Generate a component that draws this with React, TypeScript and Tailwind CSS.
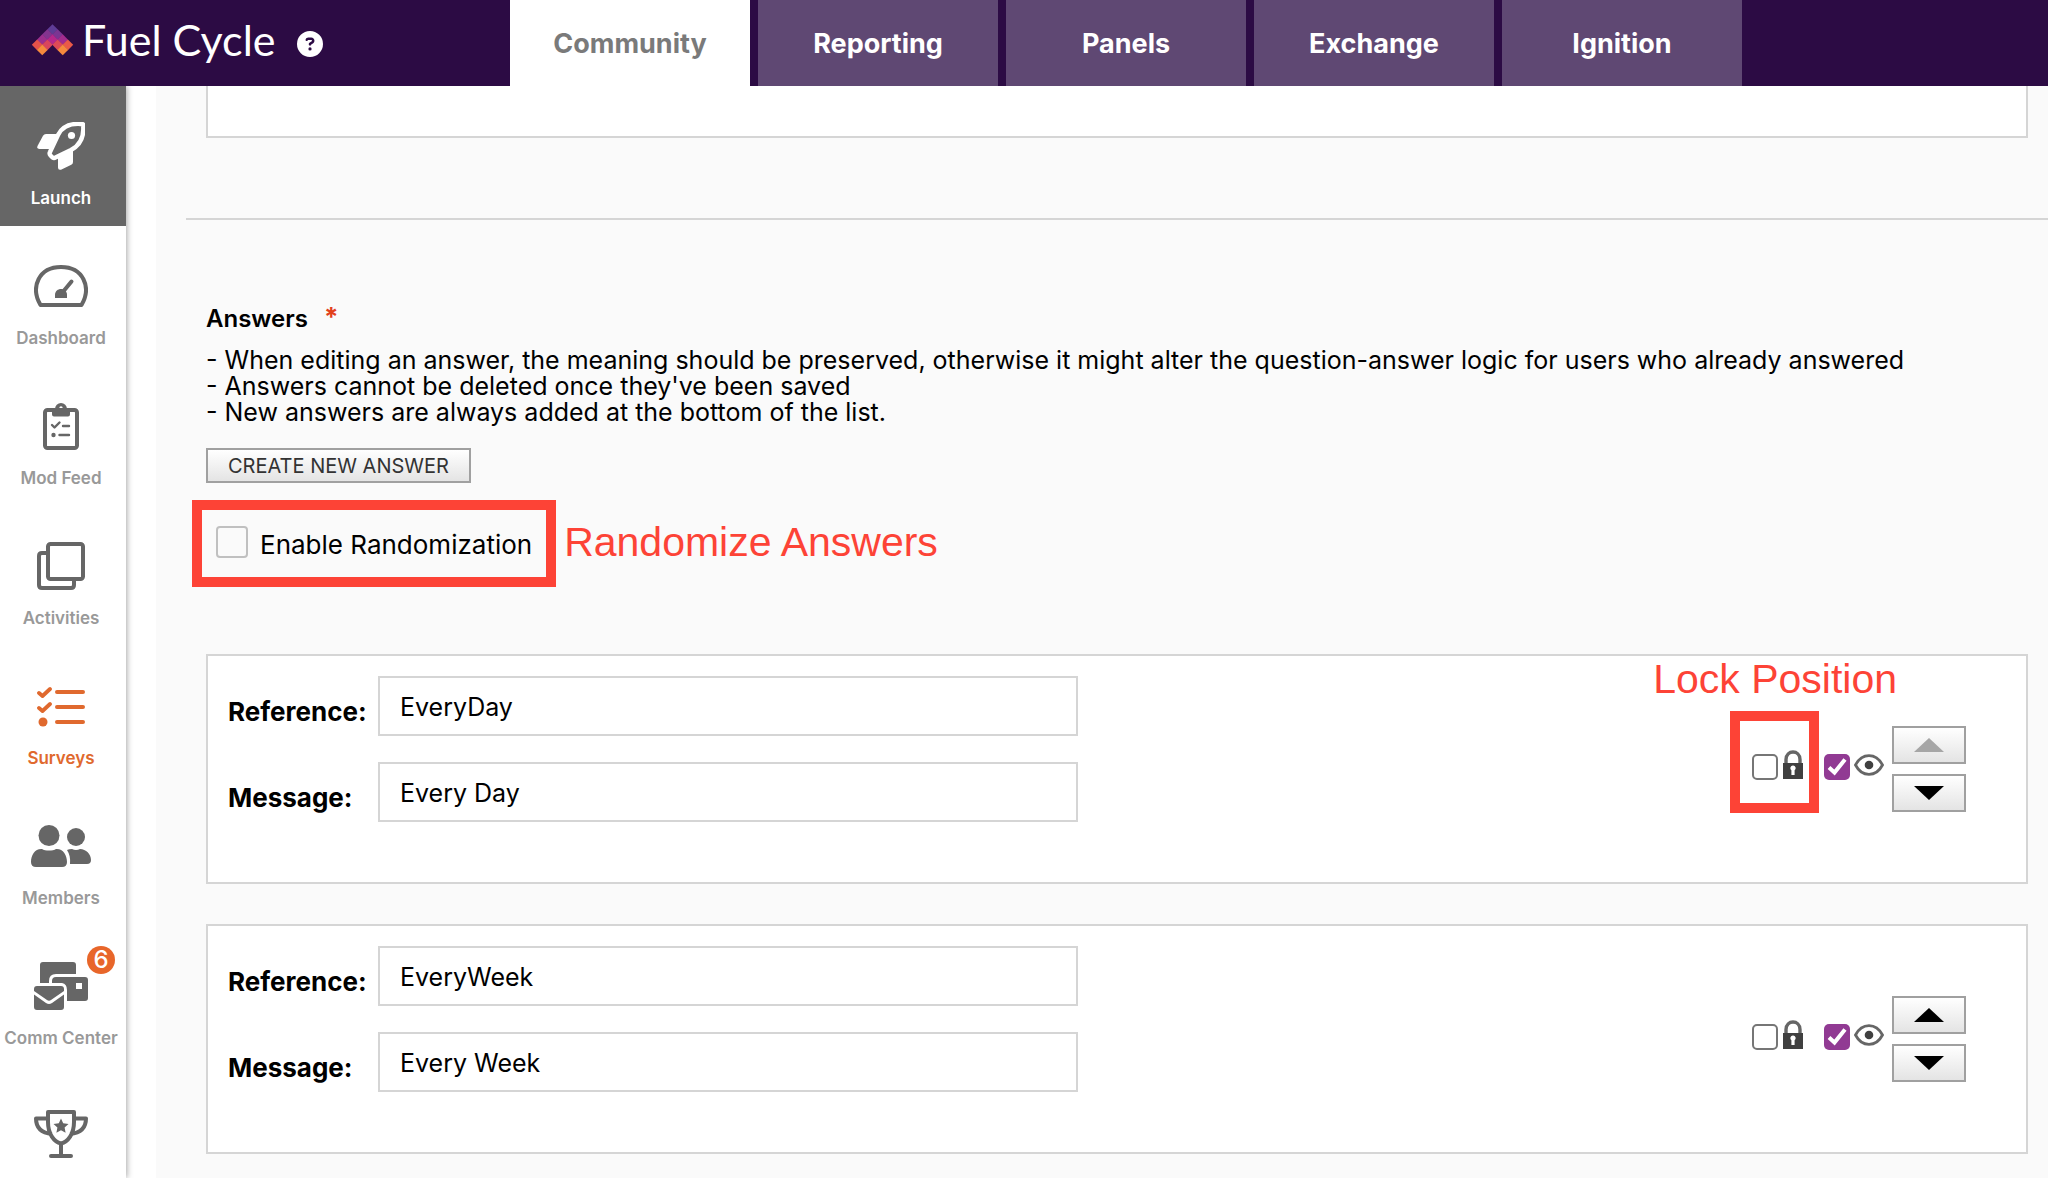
import type { ReactNode } from "react";
import { FaCircleQuestion } from "react-icons/fa6";

const tabs = ["Community", "Reporting", "Panels", "Exchange", "Ignition"];

const logoTiles: [number, number, string][] = [
  [21, 5, "#5f3c96"],
  [16, 10, "#83348f"],
  [26, 10, "#7b3592"],
  [11, 15, "#9c2f8e"],
  [21, 15, "#b5288c"],
  [31, 15, "#a32c8e"],
  [6, 20, "#e5524a"],
  [16, 20, "#d9455c"],
  [26, 20, "#dd4a57"],
  [36, 20, "#ea5a47"],
  [11, 25, "#f58a3d"],
  [31, 25, "#f58a3d"],
];

function LogoMark() {
  return (
    <svg width="43" height="32" viewBox="0 0 42 31" aria-hidden="true">
      {logoTiles.map(([x, y, fill]) => (
        <path key={`${x}-${y}`} d={`M${x} ${y - 5} l5.2 5.2 l-5.2 5.200 l-5.200 -5.200 Z`} fill={fill} />
      ))}
    </svg>
  );
}

function Icon({ w, h, children }: { w: number; h: number; children: ReactNode }) {
  return (
    <svg width={w} height={h} viewBox={`0 0 ${w} ${h}`} fill="currentColor" aria-hidden="true">
      {children}
    </svg>
  );
}

const stroke = {
  fill: "none",
  stroke: "currentColor",
  strokeWidth: 4,
  strokeLinecap: "round" as const,
  strokeLinejoin: "round" as const,
};

const rocket = (
  <Icon w={48} h={48}>
    <path
      d="M46 2.2 C34 .8 25.500 4 21 13 L13 30 Q12 32 13.500 33.500 L15.500 35.500 Q17 36.500 18.500 35.500 L34 28 C43.500 23 47.500 14 46 2.200 Z"
      {...stroke}
      strokeWidth={4.4}
    />
    <circle cx="34.500" cy="13.500" r="3.600" />
    <path d="M20 12 H9 Q7 12 6 13.700 L.5 24 Q-.5 27 2.500 27 H13 Z" />
    <path d="M36 28 V40 Q36 42 34.300 42.800 L24 47.700 Q21 48.500 21 45.500 V35 Z" />
  </Icon>
);
const gauge = (
  <Icon w={54} h={42}>
    <path d="M6.500 40 C-4 22 5 2 27 2 C49 2 58 22 47.500 40 Z" {...stroke} />
    <path d="M28 28 L37.500 16.500" {...stroke} />
    <path d="M21 33 V30 C21 22 33 22 33 30 V33 Z" />
  </Icon>
);
const clipboard = (
  <Icon w={36} h={48}>
    <rect x="2" y="8" width="32" height="38" rx="2.500" {...stroke} />
    <path
      fillRule="evenodd"
      d="M9 7 H12 A6 6 0 0 1 24 7 H27 V12.500 Q27 14.500 25 14.500 H11 Q9 14.500 9 12.500 Z M18 4.300 a1.700 1.700 0 1 0 0 3.400 a1.700 1.700 0 1 0 0 -3.400 Z"
    />
    <path d="M9 23 L11.500 25.500 L16.500 20.500" {...stroke} strokeWidth={2.4} />
    <path d="M20 24 H26 M16.500 33 H26" {...stroke} strokeWidth={2.4} />
    <circle cx="10.500" cy="33" r="2.200" />
  </Icon>
);
const copies = (
  <Icon w={48} h={48}>
    <rect x="11" y="2" width="35" height="35" rx="2.500" {...stroke} />
    <path d="M9 11 H5 Q2 11 2 14 V43 Q2 46 5 46 H34 Q37 46 37 43 V39" {...stroke} strokeLinecap="butt" />
  </Icon>
);
const listCheck = (
  <Icon w={48} h={42}>
    <path d="M2 8 L5.500 11 L13 4 M2 23 L5.500 26 L13 19" {...stroke} strokeWidth={3.8} />
    <path d="M20 7 H46 M20 22 H46 M20 37 H46" {...stroke} />
    <circle cx="6" cy="37" r="4.500" />
  </Icon>
);
const members = (
  <Icon w={60} h={42}>
    <circle cx="18" cy="10.500" r="10.500" />
    <path d="M11 24 C14 26 22 26 25 24 C32 23.500 36 30 36 37 Q36 42 31 42 H5 Q0 42 0 37 C0 30 4 23.500 11 24 Z" />
    <circle cx="45" cy="12" r="9" />
    <path d="M36 25 Q38 24 41 24 Q45 26 49 24 C55 24 60 29 60 35 Q60 39 56 39 H39 C39.500 33 38.500 29 36 25 Z" />
  </Icon>
);
const mail = (
  <Icon w={54} h={48}>
    <path d="M9 0 H39 Q42 0 42 3 V12 H22 Q15 12 15 19 V21 H6 V3 Q6 0 9 0 Z" />
    <path
      fillRule="evenodd"
      d="M22 15 H51 Q54 15 54 18 V36 Q54 39 51 39 H33 V28 Q33 22 28 21 H18 V19 Q18 15 22 15 Z M42 21 V27 H48 V21 Z"
    />
    <path d="M0 27 Q0 24 3 24 H27 Q30 24 30 27 V29 L17 38 Q15 39.500 13 38 L0 29 Z" />
    <path d="M0 32.500 L12 41 Q15 43 18 41 L30 32.500 V45 Q30 48 27 48 H3 Q0 48 0 45 Z" />
  </Icon>
);
const trophy = (
  <Icon w={54} h={48}>
    <path d="M14 2 H40 V12 C40 24 34 32 27 33.500 C20 32 14 24 14 12 Z" {...stroke} />
    <path
      d="M14 8.500 H2 C2 18 8 23 18 24 M40 8.500 H52 C52 18 46 23 36 24"
      {...stroke}
      strokeLinecap="butt"
    />
    <path d="M27 34 V45 M17 46 H37" {...stroke} />
    <path d="M27 8.500 L29.200 13.300 L34.500 14 L30.600 17.600 L31.600 22.800 L27 20.200 L22.400 22.800 L23.400 17.600 L19.500 14 L24.800 13.300 Z" />
  </Icon>
);

type NavEntry = { label: string; icon: ReactNode; state?: "current" | "accent"; badge?: number; tall?: boolean };

const navEntries: NavEntry[] = [
  { label: "Launch", icon: rocket, state: "current" },
  { label: "Dashboard", icon: gauge },
  { label: "Mod Feed", icon: clipboard },
  { label: "Activities", icon: copies },
  { label: "Surveys", icon: listCheck, state: "accent" },
  { label: "Members", icon: members },
  { label: "Comm Center", icon: mail, badge: 6, tall: true },
];

function NavItem({ label, icon, state, badge, tall }: NavEntry) {
  const tone =
    state === "current"
      ? "bg-[#666666] text-white"
      : state === "accent"
        ? "text-[#e0692e]"
        : "text-[#666666]";
  const labelTone = state ? "" : "text-[#999999]";
  return (
    <a
      href="#"
      className={`flex shrink-0 flex-col items-center pt-9 pr-1 ${tall ? "h-[148px]" : "h-[140px]"} ${tone}`}
    >
      <span className="relative flex h-12 items-center">
        {icon}
        {badge ? (
          <span className="absolute -top-4 -right-[27px] flex size-7 items-center justify-center rounded-full bg-[#e8662a] text-2xl leading-7 font-medium text-white">
            {badge}
          </span>
        ) : null}
      </span>
      <span className={`mt-4 text-[17px] leading-6 font-semibold whitespace-nowrap ${labelTone}`}>{label}</span>
    </a>
  );
}

function LockIcon() {
  return (
    <svg width="22" height="30" viewBox="0 0 22 30" aria-hidden="true">
      <path d="M4 14 V9.500 C4 -.5 18 -.5 18 9.500 V14" fill="none" stroke="#666" strokeWidth="3.400" />
      <path
        fillRule="evenodd"
        fill="#404040"
        d="M1 13 H21 V29 H1 Z M11 15.500 a2.600 2.600 0 0 0 -1.600 4.700 V25 H12.600 V20.200 A2.600 2.600 0 0 0 11 15.500 Z"
      />
    </svg>
  );
}

function EyeIcon() {
  return (
    <svg width="30" height="22" viewBox="0 0 30 22" fill="none" aria-hidden="true">
      <path d="M1.500 11 C8 -1.500 22 -1.500 28.500 11 C22 23.500 8 23.500 1.500 11 Z" stroke="#666" strokeWidth="2.800" />
      <circle cx="15" cy="11" r="4.300" fill="#404040" />
    </svg>
  );
}

function MoveButton({ up, disabled, label }: { up?: boolean; disabled?: boolean; label: string }) {
  return (
    <button
      type="button"
      disabled={disabled}
      aria-label={label}
      className={`flex h-[38px] w-[74px] items-center justify-center border-2 border-[#a0a0a0] bg-linear-to-b from-white to-[#e4e4e4] ${
        disabled ? "text-[#a6a6a6]" : "text-black"
      }`}
    >
      <svg width="30" height="14" viewBox="0 0 30 14" fill="currentColor" aria-hidden="true">
        <path d={up ? "M0 14 L15 0 L30 14 Z" : "M0 0 H30 L15 14 Z"} />
      </svg>
    </button>
  );
}

function Field({ id, label, value }: { id: string; label: string; value: string }) {
  return (
    <div className="flex items-center">
      <label htmlFor={id} className="w-[150px] shrink-0 pt-3 text-[26px] leading-8 font-bold">
        {label}
      </label>
      <input
        id={id}
        defaultValue={value}
        className="h-[60px] w-full max-w-[700px] border-2 border-[#d5d5d5] bg-white px-5 pt-0.5 text-[25px] text-black outline-none"
      />
    </div>
  );
}

function AnswerCard({ reference, message, first }: { reference: string; message: string; first?: boolean }) {
  return (
    <section className="flex h-[230px] items-start justify-between border-2 border-[#d5d5d5] bg-white pt-5 pr-[60px] pl-5">
      <div className="flex flex-1 flex-col gap-[26px]">
        <Field id={`${reference}-reference`} label="Reference:" value={reference} />
        <Field id={`${reference}-message`} label="Message:" value={message} />
      </div>
      <div className="flex items-start gap-2 pt-[50px]">
        <div className="relative mt-6 mr-3 flex items-center gap-1">
          <input
            type="checkbox"
            aria-label="Lock position"
            className="mt-1 size-[26px] appearance-none rounded-[5px] border-2 border-[#767676] bg-white"
          />
          <LockIcon />
          {first ? (
            <>
              <span className="pointer-events-none absolute -top-[39px] -right-[15px] -left-[22px] h-[102px] border-10 border-[#fd4336]" />
              <span className="absolute right-[-93px] bottom-[78px] text-[41px] leading-[46px] whitespace-nowrap text-[#fd4336] [font-family:'Liberation_Sans',sans-serif]">
                Lock Position
              </span>
            </>
          ) : null}
        </div>
        <div className="mt-[26px] flex items-start gap-1">
          <span className="relative mt-0.5 flex size-[26px]">
            <input
              type="checkbox"
              defaultChecked
              aria-label="Visible"
              className="size-[26px] appearance-none rounded-[5px] bg-[#913a93]"
            />
            <svg
              className="pointer-events-none absolute inset-0"
              width="26"
              height="26"
              viewBox="0 0 26 26"
              aria-hidden="true"
            >
              <path d="M5 13.500 L10.500 18.500 L21 5.500" fill="none" stroke="#fff" strokeWidth="4" />
            </svg>
          </span>
          <span className="pt-0.5">
            <EyeIcon />
          </span>
        </div>
        <div className="flex flex-col gap-[10px]">
          <MoveButton up disabled={first} label={`Move ${reference} up`} />
          <MoveButton label={`Move ${reference} down`} />
        </div>
      </div>
    </section>
  );
}

export default function App() {
  return (
    <div className="flex h-screen flex-col overflow-hidden bg-white text-black [font-family:Inter,sans-serif]">
      <header className="z-10 flex h-[86px] shrink-0 bg-[#2c0b44]">
        <div className="flex w-[510px] shrink-0 items-center pl-[31px] text-white">
          <div className="flex items-center pb-1.5">
            <LogoMark />
            <span className="ml-2 text-[43px] leading-[48px] whitespace-nowrap [font-family:Lato,sans-serif]">Fuel Cycle</span>
          </div>
          <button type="button" aria-label="Help" className="ml-[22px] pt-0.5">
            <FaCircleQuestion size={26} />
          </button>
        </div>
        <nav className="flex gap-2">
          {tabs.map((tab, i) => (
            <a
              key={tab}
              href="#"
              className={`flex w-60 items-center justify-center pt-0.5 text-[27px] font-bold ${
                i === 0 ? "bg-white text-[#7a7a7a]" : "bg-[#5f4873] text-white"
              }`}
            >
              {tab}
            </a>
          ))}
        </nav>
      </header>

      <div className="flex min-h-0 flex-1">
        <nav className="z-[1] flex w-[126px] shrink-0 flex-col overflow-hidden bg-white shadow-[1px_0_6px_rgba(0,0,0,0.35)]">
          {navEntries.map((entry) => (
            <NavItem key={entry.label} {...entry} />
          ))}
          <a href="#" aria-label="Rewards" className="flex shrink-0 justify-center pt-9 pr-1 text-[#666666]">
            {trophy}
          </a>
        </nav>

        <main className="ml-[30px] min-w-0 flex-1 overflow-hidden bg-[#fafafa] pl-[30px]">
          <div className="mr-5 ml-5 h-[52px] border-2 border-t-0 border-[#d5d5d5] bg-white" />
          <hr className="mt-20 border-t-2 border-[#d5d5d5]" />

          <div className="mr-5 ml-5 pt-[83px]">
            <h2 className="flex items-start text-[24px] leading-8 font-semibold">
              Answers
              <span className="ml-4 text-[26px] leading-7 font-bold text-[#e2401c]">*</span>
            </h2>
            <p className="mt-3 text-[25px] leading-[26px]">
              - When editing an answer, the meaning should be preserved, otherwise it might alter the question-answer
              logic for users who already answered
              <br />- Answers cannot be deleted once they've been saved
              <br />- New answers are always added at the bottom of the list.
            </p>
            <button
              type="button"
              className="mt-[23px] block h-[35px] border-2 border-[#a0a0a0] bg-linear-to-b from-white to-[#e4e4e4] px-5 text-xl leading-none text-[#333333]"
            >
              CREATE NEW ANSWER
            </button>

            <div className="mt-[17px] -ml-[14px] flex items-center">
              <label className="flex h-[87px] items-center border-10 border-[#fd4336] px-[14px] text-[26px] whitespace-nowrap">
                <input
                  type="checkbox"
                  className="mr-3 mb-1 size-8 appearance-none rounded-[4px] border-2 border-[#c0c0c0] bg-[#fafafa]"
                />
                <span className="pt-0.5">Enable Randomization</span>
              </label>
              <span className="ml-2 pb-1 text-[41px] leading-[46px] text-[#fd4336] [font-family:'Liberation_Sans',sans-serif]">
                Randomize Answers
              </span>
            </div>

            <div className="mt-[67px] flex flex-col gap-10">
              <AnswerCard reference="EveryDay" message="Every Day" first />
              <AnswerCard reference="EveryWeek" message="Every Week" />
            </div>
          </div>
        </main>
      </div>
    </div>
  );
}
